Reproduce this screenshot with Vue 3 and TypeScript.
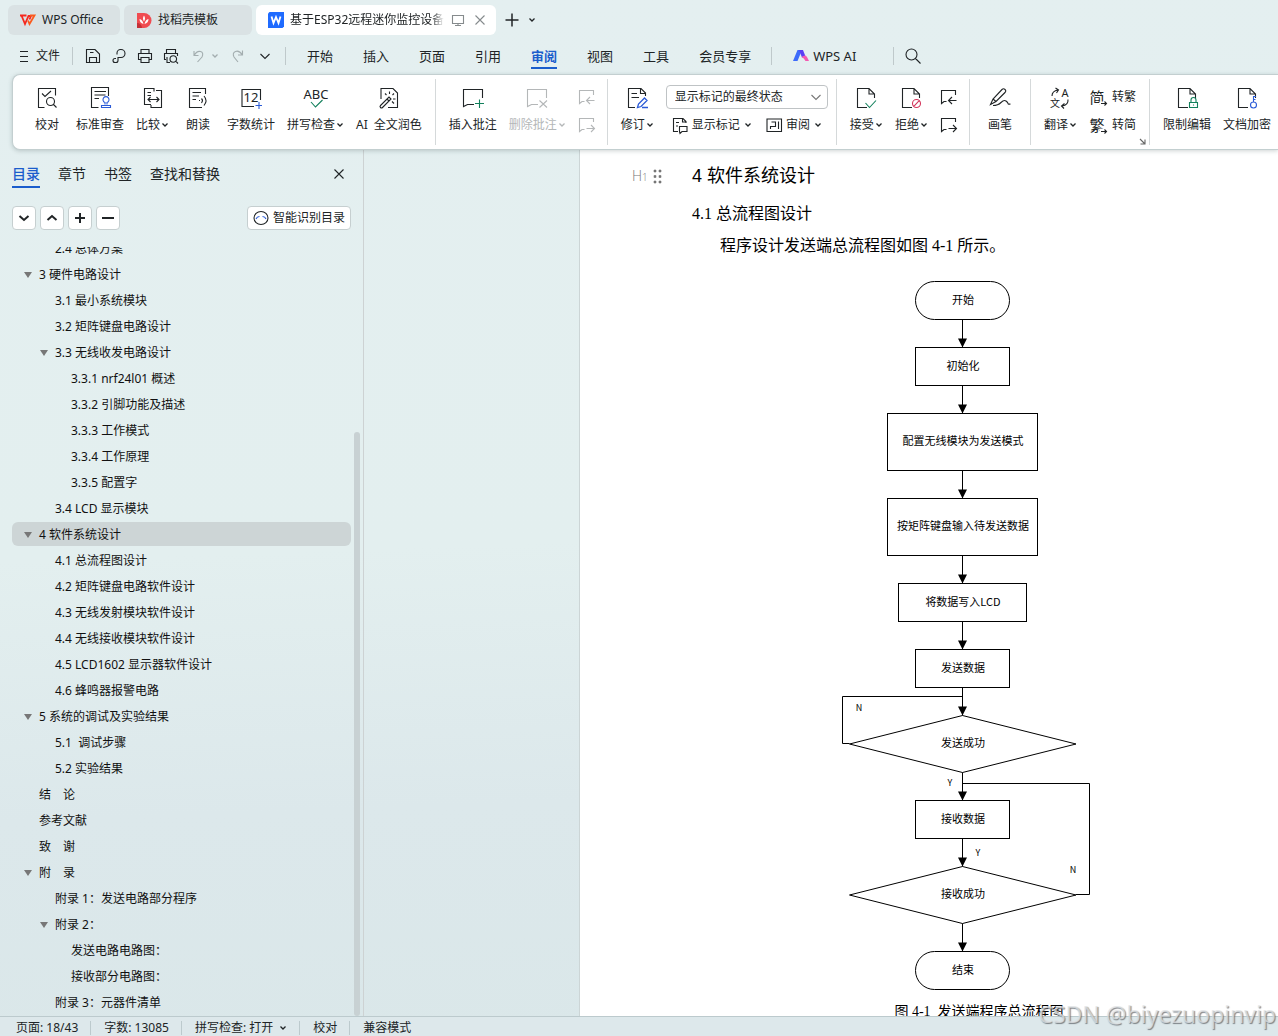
<script setup lang="ts">
import { h, ref } from 'vue'
import type { FunctionalComponent } from 'vue'

interface Mark {
  d?: string
  c?: string
  fill?: string
  w?: number
  t?: string
  x?: number
  y?: number
  s?: number
}

const BLUE = '#2b5bd7'
const GREEN = '#12805c'
const RED = '#d4365c'

const page: Mark = { d: 'M19.5 11V7L14 1.5H2.5V20.5H12M14 1.5V7H19.5' }

const marks: Record<string, Mark[]> = {
  proof: [
    { d: 'M19.5 8.5V1.5H2.5V20.5H8.5M6 6.5l3 3 6-5.5' },
    { d: 'M10.5 14.5a4 4 0 1 0 8 0a4 4 0 1 0-8 0M17.5 17.5L20.5 20.5' },
  ],
  standard: [
    { d: 'M19.5 9V.5H2.5V20.5H9.5M5.5 4.5H17M5.5 8H16.5M5.5 11.5H10' },
    { d: 'M16 17.5V15.5a3 3 0 1 1 2 0V17.5M12.5 20.5V18.5H21.5V20.5Z', c: BLUE },
  ],
  compare: [
    { d: 'M12 4.5V1.5H2.5V17.5H9M14 3.5H19.5V20.5H9V18M5.5 5.5H9M5.5 8.5H9' },
    { d: 'M6 12.5H17M8.5 10L6 12.5L8.5 15M14.5 10L17 12.5L14.5 15' },
  ],
  read: [
    { d: 'M18.5 7V1.5H2.5V20.5H15M5.5 5.5H14M5.5 9H12M5.5 12.5H9' },
    { d: 'M14.5 11.5q2 2 0 4.5M17 9q4 4.5 0 9.5M12 13.5h1' },
  ],
  count: [
    { d: 'M20.5 13V2.5H2V19.5H14' },
    { t: '12', x: 11, y: 15, s: 13 },
    { d: 'M19 15V22M15.5 18.5H22', c: BLUE },
  ],
  spell: [
    { t: 'ABC', x: 11, y: 12, s: 13 },
    { d: 'M6 15l4.5 5L17.5 13', c: GREEN },
  ],
  wand: [
    { d: 'M3 12V1.5H15L19.5 6V20.5H10' },
    { d: 'M2.5 18.5L11 10l2 2L4.5 20.5a1.4 1.4 0 0 1-2-2ZM9 12l2 2' },
    { d: 'M11.5 4.5V7M7 6.5l1.5 1.5M16 6.5L14.5 8M15 12h2.5M14 14.5l2 2' },
  ],
  addNote: [
    { d: 'M20.5 11V2.5H1.5V19.5L5.5 17.5H12' },
    { d: 'M17.5 12.5V21M13 16.5H22', c: GREEN },
  ],
  delNote: [
    { d: 'M20.5 11V2.5H1.5V19.5L5.5 17.5H12' },
    { d: 'M13.5 13.5L21 20.5M21 13.5L13.5 20.5' },
  ],
  prev: [{ d: 'M15.5 6V1.5H1.5V14.5L4 12.5H6.5M16.5 11.5H8.5M12 8L8.5 11.5L12 15' }],
  next: [{ d: 'M15.5 5V1.5H1.5V14.5L4 12.5H6.5M8.5 11.5H16.5M13 8L16.5 11.5L13 15' }],
  revise: [
    { d: 'M19.5 9V6L15 1.5H2.5V20.5H9M14.5 1.5V6.5H19.5M5.5 6.5H11M5.5 10.5H13' },
    { d: 'M11.5 20.5L12.5 17L18.5 11l2.5 2.5L15 19.5ZM16 20.5H22', c: BLUE, w: 1.3 },
  ],
  markup: [
    { d: 'M14 6V4.5L11 1.5H1.5V14.5H6M10.5 1.5V5H14M4 5.5H7M4 9H6' },
    { d: 'M7.5 14.5V9.5H15V14.5H10L8 16.5Z' },
  ],
  pane: [{ d: 'M1 2H15.5V14.5H1ZM12.5 4.5V12M4.5 12V9.5H7M5.5 5H9.5V9.5H7' }],
  accept: [page, { d: 'M10.5 16l4 4.5L21 13.5', c: GREEN }],
  reject: [page, { d: 'M12.5 16.5a4 4 0 1 0 8 0a4 4 0 1 0-8 0M13.8 19.3L19.2 13.7', c: RED }],
  lock: [page, { d: 'M13.5 15.5H21.5V20.5H13.5ZM15 15.5V13a2.5 2.5 0 0 1 5 0V15.5M17.5 17.5v1', c: GREEN }],
  key: [page, { d: 'M14.5 18a3 3 0 1 0 6 0a3 3 0 1 0-6 0M17.5 15V9.5H20M17.5 12.5H19.5', c: BLUE }],
  pen: [
    { d: 'M1.5 17.5L4 12L13 2.5q1.5-1.5 3 0t0 3L7 14.5ZM4 12L7 14.5' },
    { d: 'M4 18.5Q9 18.5 12 15.5T17 14T19 16.5T21.5 17' },
  ],
  translate: [
    { t: 'A', x: 16, y: 10, s: 11 },
    { t: '文', x: 6, y: 20, s: 10 },
    { d: 'M3 9Q3 4 9 3M6.5 1L9.5 3L7.5 6M19 12.5Q19.5 18 13 19M15.5 16.5L12.5 19L15 21.5' },
  ],
  toTrad: [
    { t: '简', x: 8, y: 14, s: 15 },
    { d: 'M11 13h8v5h-8z', c: '#fff', fill: '#fff' },
    { d: 'M12 14.5H17.5M15.5 12.5L17.5 14.5L15.5 16.5' },
  ],
  toSimp: [
    { t: '繁', x: 8, y: 14, s: 15 },
    { d: 'M11 12h8v5h-8z', c: '#fff', fill: '#fff' },
    { d: 'M12 14.5H17.5M15.5 12.5L17.5 14.5L15.5 16.5' },
  ],
  save: [{ d: 'M1.5 1.5H10L14.5 6V14.5H1.5ZM4.5 14V9.5H11.5V14M5 4.5H8.5' }],
  share: [{ d: 'M6 6.5V5a3.5 3.5 0 0 1 3.5-3.5H10a4 4 0 0 1 0 8H7V12.5a2 2 0 0 1-2 2H4a2 2 0 0 1 0-4H5' }],
  print: [{ d: 'M4 5V1.5H12V5M4 11.5H1.5V5.5H14.5V11.5H12M4 9.5H12V14.5H4Z' }],
  preview: [
    { d: 'M3.5 5V1.5H12.5V5M3 11.5H1.5V5.5H14.5V8M4 9V14.5H7' },
    { d: 'M7 11a3.3 3.3 0 1 0 6.6 0a3.3 3.3 0 1 0-6.6 0M12.8 13.2L15 15.5' },
  ],
  undo: [{ d: 'M5 3V7.5H9.5M5 7.5Q8 2.5 11.5 3.5T13 9L8.5 14' }],
  redo: [{ d: 'M12.5 2.5V7H8M12.5 7Q9 2 5.5 3.5T4 9L8 14' }],
  down: [{ d: 'M3.5 6L8 10.5L12.5 6' }],
  search: [{ d: 'M1 6.5a5.5 5.5 0 1 0 11 0a5.5 5.5 0 1 0-11 0M10.5 10.5L15.5 15.5' }],
  close: [{ d: 'M3.5 3.5L12.5 12.5M12.5 3.5L3.5 12.5' }],
  screen: [{ d: 'M2.5 3.5H13.5V11.5H2.5ZM8 11.5V13.5M5 13.5H11' }],
  plus: [{ d: 'M8 1.5V14.5M1.5 8H14.5', w: 1.5 }],
  burger: [{ d: 'M0 2.5H8M0 7.5H8M0 12.5H8' }],
  launch: [{ d: 'M1 1L5.5 5.5M6 1.5V6H1.5' }],
  chev: [{ d: 'M1.5 2.5L4 5L6.5 2.5', w: 1.3 }],
  boldDown: [{ d: 'M3.5 6L8 10L12.5 6', w: 2 }],
  boldUp: [{ d: 'M3.5 10L8 6L12.5 10', w: 2 }],
  boldPlus: [{ d: 'M8 3V13M3 8H13', w: 2 }],
  boldMinus: [{ d: 'M2 8H14', w: 2 }],
  wps: [
    { d: 'M0 3.5H6.5M1.5 3.5L5 12L8.5 4H11L9.5 7.5', c: '#f5281e', w: 1.8 },
    { d: 'M8 8.5L9.5 12L14.5 3.5H10', c: '#fb5a1c', w: 1.8 },
  ],
  docer: [
    { d: 'M1 1H8a7 7 0 0 1 0 15H1Z', c: 'none', fill: '#f04b50' },
    { d: 'M1 11a5 5 0 0 1 5 5H1Z', c: 'none', fill: '#c53036' },
    { d: 'M8 3.5q2 3 0 6q-2-3 0-6ZM3.5 7q3 .5 4 5q-4-1-4-5ZM12.5 7q-3 .5-4 5q4-1 4-5Z', c: 'none', fill: '#fff' },
  ],
  word: [
    { d: 'M1.5 0H16V14.5L14.5 16H0V1.5Z', c: 'none', fill: '#1f6bff' },
    { d: 'M3.5 4.5L5.5 11L8 5L10.5 11L12.5 4.5', c: '#fff', w: 1.8 },
  ],
  ai: [
    { d: 'M4.5 2H9L4.5 13H0Z', c: 'none', fill: '#3d6bfa' },
    { d: 'M6 2H10L12.5 8.5L9 9.5Z', c: 'none', fill: '#5b3df5' },
    { d: 'M8.5 9q4-3 5.5 0L16 13H12.5Q11 10 8.5 9Z', c: 'none', fill: '#f45ab0' },
  ],
  face: [
    { d: 'M1 8a7 6.5 0 1 0 14 0a7 6.5 0 1 0-14 0' },
    { d: 'M3 9q1-2.5 3.5-2.5M9.5 6.5q2.5 0 3.5 2.5', c: BLUE },
  ],
  grip: [{ d: 'M2 1h2v2h-2zM7 1h2v2h-2zM2 6.5h2v2h-2zM7 6.5h2v2h-2zM2 12h2v2h-2zM7 12h2v2h-2z', c: '#777', w: 0.6, fill: '#777' }],
}

const Icon: FunctionalComponent<{ name: string; w?: number; ht?: number }> = (props) => {
  const w = props.w ?? 16
  const ht = props.ht ?? w
  return h(
    'svg',
    { width: w, height: ht, viewBox: `0 0 ${w} ${ht}`, fill: 'none', overflow: 'visible', 'aria-hidden': 'true' },
    marks[props.name].map((m) =>
      m.t
        ? h('text', { x: m.x, y: m.y, 'font-size': m.s, 'text-anchor': 'middle', fill: 'currentColor' }, m.t)
        : h('path', { d: m.d, stroke: m.c ?? 'currentColor', 'stroke-width': m.w ?? 1.1, fill: m.fill ?? 'none' }),
    ),
  )
}
Icon.props = ['name', 'w', 'ht']

const menus = ['开始', '插入', '页面', '引用', '审阅', '视图', '工具', '会员专享']
const activeMenu = ref('审阅')

interface Tool { icon: string; label: string; arrow?: boolean; off?: boolean }
const proofTools: Tool[] = [
  { icon: 'proof', label: '校对' },
  { icon: 'standard', label: '标准审查' },
  { icon: 'compare', label: '比较', arrow: true },
  { icon: 'read', label: '朗读' },
  { icon: 'count', label: '字数统计' },
  { icon: 'spell', label: '拼写检查', arrow: true },
  { icon: 'wand', label: 'AI\u2002全文润色' },
]
const noteTools: Tool[] = [
  { icon: 'addNote', label: '插入批注' },
  { icon: 'delNote', label: '删除批注', arrow: true, off: true },
]
const reviseTools: Tool[] = [{ icon: 'revise', label: '修订', arrow: true }]
const decideTools: Tool[] = [
  { icon: 'accept', label: '接受', arrow: true },
  { icon: 'reject', label: '拒绝', arrow: true },
]
const penTools: Tool[] = [{ icon: 'pen', label: '画笔' }]
const translateTools: Tool[] = [{ icon: 'translate', label: '翻译', arrow: true }]
const protectTools: Tool[] = [
  { icon: 'lock', label: '限制编辑' },
  { icon: 'key', label: '文档加密' },
]

const ToolButtons: FunctionalComponent<{ tools: Tool[] }> = (props) =>
  props.tools.map((t) =>
    h('button', { type: 'button', class: ['tool', { plain: !t.arrow }], disabled: t.off }, [
      h(Icon, { name: t.icon, w: 22 }),
      h('span', { class: 'tool-label' }, [t.label, t.arrow ? h(Icon, { name: 'chev', w: 8 }) : null]),
    ]),
  )
ToolButtons.props = ['tools']

const sideTabs = ['目录', '章节', '书签', '查找和替换']
const activeSide = ref('目录')

interface Entry { level: number; text: string; open?: boolean }
const outline: Entry[] = [
  { level: 2, text: '2.4 总体方案' },
  { level: 1, text: '3 硬件电路设计', open: true },
  { level: 2, text: '3.1 最小系统模块' },
  { level: 2, text: '3.2 矩阵键盘电路设计' },
  { level: 2, text: '3.3 无线收发电路设计', open: true },
  { level: 3, text: '3.3.1 nrf24l01 概述' },
  { level: 3, text: '3.3.2 引脚功能及描述' },
  { level: 3, text: '3.3.3 工作模式' },
  { level: 3, text: '3.3.4 工作原理' },
  { level: 3, text: '3.3.5 配置字' },
  { level: 2, text: '3.4 LCD 显示模块' },
  { level: 1, text: '4 软件系统设计', open: true },
  { level: 2, text: '4.1 总流程图设计' },
  { level: 2, text: '4.2 矩阵键盘电路软件设计' },
  { level: 2, text: '4.3 无线发射模块软件设计' },
  { level: 2, text: '4.4 无线接收模块软件设计' },
  { level: 2, text: '4.5 LCD1602 显示器软件设计' },
  { level: 2, text: '4.6 蜂鸣器报警电路' },
  { level: 1, text: '5 系统的调试及实验结果', open: true },
  { level: 2, text: '5.1  调试步骤' },
  { level: 2, text: '5.2 实验结果' },
  { level: 1, text: '结\u3000论' },
  { level: 1, text: '参考文献' },
  { level: 1, text: '致\u3000谢' },
  { level: 1, text: '附\u3000录', open: true },
  { level: 2, text: '附录 1：发送电路部分程序' },
  { level: 2, text: '附录 2：', open: true },
  { level: 3, text: '发送电路电路图：' },
  { level: 3, text: '接收部分电路图：' },
  { level: 2, text: '附录 3：元器件清单' },
]
const current = ref('4 软件系统设计')

const boxes = [
  { x: 75.5, y: 3.5, w: 94, ht: 38, r: 19, t: '开始' },
  { x: 75.5, y: 69.5, w: 94, ht: 38, r: 0, t: '初始化' },
  { x: 47.5, y: 135.5, w: 150, ht: 57, r: 0, t: '配置无线模块为发送模式' },
  { x: 47.5, y: 220.5, w: 150, ht: 57, r: 0, t: '按矩阵键盘输入待发送数据' },
  { x: 58.5, y: 305.5, w: 128, ht: 38, r: 0, t: '将数据写入LCD' },
  { x: 75.5, y: 371.5, w: 94, ht: 38, r: 0, t: '发送数据' },
  { x: 75.5, y: 522.5, w: 94, ht: 38, r: 0, t: '接收数据' },
  { x: 75.5, y: 673.5, w: 94, ht: 38, r: 19, t: '结束' },
]
const diamonds = [
  { y: 437.5, t: '发送成功' },
  { y: 588.5, t: '接收成功' },
]
const arrows = [
  [41.5, 69.5], [107.5, 135.5], [192.5, 220.5], [277.5, 305.5], [343.5, 371.5],
  [409.5, 437.5], [494.5, 522.5], [560.5, 588.5], [645.5, 673.5],
]
const branches = [
  { x: 19, y: 433, t: 'N' },
  { x: 110, y: 508, t: 'Y' },
  { x: 138, y: 578, t: 'Y' },
  { x: 233, y: 595, t: 'N' },
]
</script>

<template>
  <div class="app">
    <header class="tabs">
      <button type="button" class="tab home"><Icon name="wps" />WPS Office</button>
      <button type="button" class="tab docer"><Icon name="docer" />找稻壳模板</button>
      <div class="tab doc">
        <Icon name="word" />
        <span class="doc-name">基于ESP32远程迷你监控设备的设计</span>
        <Icon name="screen" class="dim" />
        <button type="button" class="bare dim" aria-label="关闭标签"><Icon name="close" /></button>
      </div>
      <button type="button" class="bare new" aria-label="新建"><Icon name="plus" /></button>
      <button type="button" class="bare" aria-label="标签列表"><Icon name="chev" :w="8" /></button>
    </header>

    <nav class="menubar">
      <button type="button" class="bare file"><Icon name="burger" :w="8" :ht="15" />文件</button>
      <i class="rule"></i>
      <div class="quick">
        <button type="button" class="bare" aria-label="保存"><Icon name="save" /></button>
        <button type="button" class="bare" aria-label="输出"><Icon name="share" /></button>
        <button type="button" class="bare" aria-label="打印"><Icon name="print" /></button>
        <button type="button" class="bare" aria-label="打印预览"><Icon name="preview" /></button>
        <button type="button" class="bare undo" aria-label="撤销"><Icon name="undo" /><Icon name="chev" :w="8" /></button>
        <button type="button" class="bare undo" aria-label="恢复"><Icon name="redo" /></button>
        <button type="button" class="bare" aria-label="更多"><Icon name="down" /></button>
      </div>
      <i class="rule"></i>
      <div class="menus">
        <button
          v-for="m in menus" :key="m" type="button" class="bare menu"
          :class="{ on: m === activeMenu }" @click="activeMenu = m"
        >{{ m }}</button>
      </div>
      <i class="rule"></i>
      <button type="button" class="bare ai"><Icon name="ai" />WPS AI</button>
      <i class="rule"></i>
      <button type="button" class="bare search" aria-label="搜索"><Icon name="search" /></button>
    </nav>

    <section class="ribbon" aria-label="审阅">
      <div class="group"><ToolButtons :tools="proofTools" /></div>
      <div class="group">
        <ToolButtons :tools="noteTools" />
        <div class="pair">
          <button type="button" class="bare" disabled aria-label="上一条批注"><Icon name="prev" /></button>
          <button type="button" class="bare" disabled aria-label="下一条批注"><Icon name="next" /></button>
        </div>
      </div>
      <div class="group wide">
        <ToolButtons :tools="reviseTools" />
        <div class="stack">
          <div class="select">
            <select aria-label="标记状态"><option>显示标记的最终状态</option></select>
            <Icon name="down" />
          </div>
          <div class="row">
            <button type="button" class="bare"><Icon name="markup" />显示标记<Icon name="chev" :w="8" /></button>
            <button type="button" class="bare"><Icon name="pane" />审阅<Icon name="chev" :w="8" /></button>
          </div>
        </div>
      </div>
      <div class="group">
        <ToolButtons :tools="decideTools" />
        <div class="pair">
          <button type="button" class="bare" aria-label="上一条修订"><Icon name="prev" /></button>
          <button type="button" class="bare" aria-label="下一条修订"><Icon name="next" /></button>
        </div>
      </div>
      <div class="group"><ToolButtons :tools="penTools" /></div>
      <div class="group">
        <ToolButtons :tools="translateTools" />
        <div class="pair">
          <button type="button" class="bare"><Icon name="toTrad" :w="18" :ht="16" />转繁</button>
          <button type="button" class="bare"><Icon name="toSimp" :w="18" :ht="16" />转简</button>
        </div>
        <button type="button" class="bare launcher" aria-label="更多选项"><Icon name="launch" :w="7" /></button>
      </div>
      <div class="group"><ToolButtons :tools="protectTools" /></div>
    </section>

    <main class="work">
      <aside class="side">
        <div class="side-tabs">
          <button
            v-for="s in sideTabs" :key="s" type="button" class="bare side-tab"
            :class="{ on: s === activeSide }" @click="activeSide = s"
          >{{ s }}</button>
          <button type="button" class="bare side-close" aria-label="关闭"><Icon name="close" /></button>
        </div>
        <div class="side-tools">
          <button type="button" class="chip" aria-label="展开"><Icon name="boldDown" /></button>
          <button type="button" class="chip" aria-label="收起"><Icon name="boldUp" /></button>
          <button type="button" class="chip" aria-label="增加"><Icon name="boldPlus" /></button>
          <button type="button" class="chip" aria-label="减少"><Icon name="boldMinus" /></button>
          <button type="button" class="chip smart"><Icon name="face" />智能识别目录</button>
        </div>
        <div class="outline">
          <ul>
            <li
              v-for="e in outline" :key="e.text" :class="['lv' + e.level, { on: e.text === current }]"
              @click="current = e.text"
            ><i :class="{ tri: e.open }"></i>{{ e.text }}</li>
          </ul>
          <div class="thumb"></div>
        </div>
      </aside>

      <div class="canvas">
        <article class="paper">
          <div class="handle"><span>H<small>1</small></span><Icon name="grip" :w="11" :ht="15" /></div>
          <div class="content">
            <h1>4 软件系统设计</h1>
            <h2>4.1 总流程图设计</h2>
            <p>程序设计发送端总流程图如图 4-1 所示。</p>
            <figure>
              <svg width="278" height="714" viewBox="0 0 278 714" class="flow">
                <g fill="none" stroke="#000">
                  <rect v-for="b in boxes" :key="b.t" :x="b.x" :y="b.y" :width="b.w" :height="b.ht" :rx="b.r" />
                  <path v-for="d in diamonds" :key="d.t" :d="`M9.5 ${d.y + 28.5}L122.5 ${d.y}L236 ${d.y + 28.5}L122.5 ${d.y + 57}Z`" />
                  <path v-for="a in arrows" :key="a[0]" :d="`M122.5 ${a[0]}V${a[1]}`" />
                  <path d="M122.5 418.5H2.5V465.5H9.5M236 616.5H249.5V505.5H122.5" />
                </g>
                <path v-for="a in arrows" :key="a[1]" :d="`M118 ${a[1] - 9}H127L122.5 ${a[1]}Z`" />
                <text v-for="b in boxes" :key="b.t" x="123" :y="b.y + b.ht / 2 + 3">{{ b.t }}</text>
                <text v-for="d in diamonds" :key="d.t" x="123" :y="d.y + 31">{{ d.t }}</text>
                <text v-for="n in branches" :key="n.y" class="branch" :x="n.x" :y="n.y">{{ n.t }}</text>
              </svg>
              <figcaption>图 4-1&nbsp; 发送端程序总流程图</figcaption>
            </figure>
          </div>
        </article>
      </div>
    </main>

    <footer class="status">
      <span>页面: 18/43</span>
      <span>字数: 13085</span>
      <button type="button" class="bare">拼写检查: 打开<Icon name="chev" :w="8" /></button>
      <span>校对</span>
      <span>兼容模式</span>
    </footer>
    <div class="watermark">CSDN @biyezuopinvip</div>
  </div>
</template>

<style>
body {
  margin: 0;
}
</style>

<style scoped>
.app {
  position: relative;
  display: flex;
  flex-direction: column;
  height: 100vh;
  overflow: hidden;
  background: linear-gradient(178deg, #e4eff0 0%, #e3efef 52%, #dce8eb 76%, #dae7e9 100%);
  color: #202426;
  font: 12px/18px "Noto Sans", "Noto Sans CJK SC", sans-serif;
}
.app :deep(svg) {
  flex: none;
  display: block;
}
.app :deep(button) {
  font: inherit;
  color: inherit;
  border: 0;
  margin: 0;
  padding: 0;
  background: none;
  white-space: nowrap;
}
.app :deep(button:disabled) {
  color: #b4b7b8;
}
.app .bare {
  display: flex;
  align-items: center;
}

/* document tabs */
.tabs {
  display: flex;
  align-items: center;
  gap: 4px;
  padding: 5px 8px;
  height: 30px;
}
.app .tab {
  display: flex;
  align-items: center;
  gap: 6px;
  box-sizing: border-box;
  height: 30px;
  padding: 0 12px;
  border-radius: 6px;
  background: #dae2e4;
}
.app .home {
  width: 112px;
}
.app .docer {
  width: 128px;
}
.app .doc {
  width: 240px;
  padding-right: 8px;
  background: #fff;
}
.doc-name {
  flex: 1;
  overflow: hidden;
  white-space: nowrap;
  mask-image: linear-gradient(90deg, #000 92%, transparent);
}
.app .dim {
  color: #868b8d;
}
.app .new {
  margin: 0 4px;
}

/* menu bar */
.menubar {
  display: flex;
  align-items: center;
  height: 30px;
  padding: 1px 20px 3px;
}
.rule {
  flex: none;
  width: 1px;
  height: 18px;
  background: #bfc9cb;
}
.app .file {
  gap: 8px;
  margin-right: 12px;
}
.quick {
  display: flex;
  gap: 10px;
  margin: 0 12px;
}
.app .undo {
  gap: 6px;
  margin-right: 1px;
  color: #a3adaf;
}
.menus {
  display: flex;
  gap: 30px;
  margin: 0 20px 0 21px;
  font-size: 13px;
}
.app .menu {
  height: 26px;
  border-top: 2px solid transparent;
  border-bottom: 2px solid transparent;
}
.app .menu.on {
  border-bottom-color: #1b5dcc;
  color: #1b5dcc;
  font-weight: 700;
}
.app .ai {
  gap: 4px;
  margin: 0 37px 0 21px;
  font-size: 13px;
}
.app .search {
  margin-left: 11px;
}

/* ribbon */
.ribbon {
  position: relative;
  z-index: 1;
  display: flex;
  flex: none;
  box-sizing: border-box;
  height: 76px;
  margin-left: 12px;
  padding: 4px 0 4px 4px;
  border: 1px solid #c3cfd0;
  border-right: 0;
  border-radius: 8px 0 0 8px;
  background: #fff;
  box-shadow: 0 1px 4px rgba(60, 80, 80, 0.25);
}
.group {
  position: relative;
  display: flex;
  flex: none;
  gap: 12px;
  padding: 6px 13px 0;
  border-right: 1px solid #d5d9da;
}
.group:last-child {
  border-right: 0;
}
.group.wide {
  padding-right: 8px;
}
.ribbon :deep(.tool) {
  display: flex;
  flex-direction: column;
  align-items: center;
  align-self: flex-start;
  gap: 7px;
  padding-top: 2px;
}
.ribbon :deep(.plain) {
  min-width: 34px;
}
.ribbon :deep(.tool-label) {
  display: flex;
  align-items: center;
  gap: 1px;
}
.pair {
  display: flex;
  flex-direction: column;
  gap: 10px;
  padding-top: 3px;
}
.pair .bare {
  gap: 5px;
  height: 18px;
}
.stack {
  display: flex;
  flex-direction: column;
  gap: 7px;
}
.select {
  display: grid;
  align-items: center;
  width: 162px;
}
.select select {
  grid-area: 1 / 1;
  height: 24px;
  padding: 0 8px;
  appearance: none;
  border: 1px solid #bfc3c5;
  border-radius: 4px;
  background: #fff;
  color: inherit;
  font: inherit;
}
.select svg {
  grid-area: 1 / 1;
  justify-self: end;
  margin-right: 4px;
  color: #777;
  pointer-events: none;
}
.row {
  display: flex;
  gap: 14px;
  padding-left: 6px;
}
.row .bare {
  gap: 4px;
}
.app .launcher {
  position: absolute;
  right: 3px;
  bottom: 0;
  color: #666;
}

/* work area */
.work {
  display: flex;
  flex: 1;
  min-height: 0;
}
.side {
  display: flex;
  flex: none;
  flex-direction: column;
  width: 363px;
  border-right: 1px solid #cdd2d3;
}
.side-tabs {
  display: flex;
  align-items: center;
  gap: 18px;
  padding: 10px 16px 0 12px;
  font-size: 14px;
}
.app .side-tab {
  height: 28px;
  border-top: 2px solid transparent;
  border-bottom: 2px solid transparent;
}
.app .side-tab.on {
  border-bottom-color: #1b5dcc;
  color: #1b5dcc;
  font-weight: 500;
}
.app .side-close {
  margin-left: auto;
}
.side-tools {
  display: flex;
  gap: 4px;
  padding: 18px 12px 17px;
}
.app .chip {
  display: flex;
  align-items: center;
  justify-content: center;
  gap: 4px;
  box-sizing: border-box;
  width: 24px;
  height: 24px;
  border: 1px solid #c6cfd0;
  border-radius: 4px;
  background: #fff;
}
.app .smart {
  width: 104px;
  margin-left: auto;
}
.outline {
  position: relative;
  flex: 1;
  min-height: 0;
  overflow: hidden;
}
.outline ul {
  margin: -11px 12px 0;
  padding: 0;
  list-style: none;
}
.outline li {
  display: flex;
  align-items: center;
  box-sizing: border-box;
  height: 24px;
  margin-bottom: 2px;
  padding-top: 1px;
  border-radius: 6px;
  white-space: pre;
  color: #111;
}
.outline li.on {
  background: #cdd5d6;
}
.outline i {
  width: 15px;
}
.outline .tri::before {
  content: "";
  display: block;
  width: 0;
  border: 4px solid transparent;
  border-top: 6px solid #777;
  border-bottom: 0;
}
.lv1 {
  padding-left: 12px;
}
.lv2 {
  padding-left: 28px;
}
.lv3 {
  padding-left: 44px;
}
.thumb {
  position: absolute;
  right: 3px;
  top: 24%;
  bottom: 0;
  width: 6px;
  border-radius: 3px;
  background: #c8d1d3;
}

.canvas {
  flex: 1;
  min-width: 0;
  overflow: hidden;
}
.paper {
  display: grid;
  grid-template-columns: 60px 574px;
  width: max-content;
  min-height: 100%;
  box-sizing: border-box;
  margin-left: 215px;
  padding: 13px 112px 0 52px;
  border-left: 1px solid #ccd5d6;
  background: #fff;
  color: #000;
}
.handle {
  display: flex;
  align-items: center;
  gap: 4px;
  height: 26px;
  color: #777;
  font-family: "Open Sans", sans-serif;
  font-size: 14px;
  font-weight: 300;
}
.handle small {
  font-size: 10px;
}
h1,
h2,
p,
figure {
  margin: 0;
  font-weight: 400;
}
h1 {
  font: 18px/26px "Liberation Sans", "Noto Sans CJK SC", sans-serif;
}
h2,
p {
  font: 16px/26px "Liberation Serif", "Noto Sans CJK SC", serif;
}
h2 {
  margin: 12px 0 6px;
}
p {
  padding-left: 28px;
}
figure {
  display: flex;
  flex-direction: column;
  align-items: center;
  padding-top: 19px;
}
.flow text {
  font-family: "Noto Sans CJK SC", sans-serif;
  font-size: 11px;
  text-anchor: middle;
}
.flow .branch {
  font-size: 9px;
}
figcaption {
  margin-top: 9px;
  font: 14px/22px "Liberation Serif", "Noto Sans CJK SC", serif;
}

/* status bar */
.status {
  display: flex;
  align-items: center;
  flex: none;
  box-sizing: border-box;
  height: 20px;
  padding: 3px 0 0 3px;
  border-top: 1px solid #bccacd;
  background: #dde8eb;
}
.status > * {
  display: flex;
  height: 14px;
  align-items: center;
  padding: 0 13px;
}
.app .status .bare {
  gap: 6px;
  padding: 0 13px;
}
.status > * + * {
  box-shadow: -1px 0 #bccacd;
}
.watermark {
  position: absolute;
  z-index: 2;
  right: 2px;
  bottom: 7px;
  color: rgba(225, 228, 230, 0.75);
  font-size: 23px;
  line-height: 30px;
  text-shadow: 1px 1px 1px rgba(90, 95, 100, 0.75);
}
</style>
